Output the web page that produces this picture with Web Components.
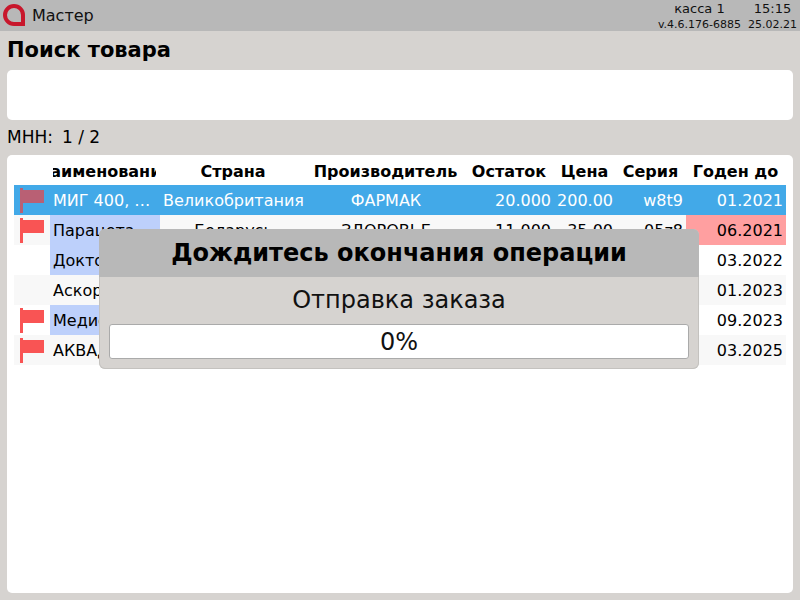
<!DOCTYPE html>
<html lang="ru">
<head>
<meta charset="utf-8">
<title>Мастер</title>
<style>
html, body { margin: 0; height: 100%; }
body {
    width: 800px;
    height: 600px;
    overflow: hidden;
    background: #d6d3d0;
    color: #000;
    font-family: "DejaVu Sans", sans-serif;
}
</style>
</head>
<body>
<pos-screen>
    <top-bar slot="bar" title-text="Мастер" kassa="касса 1" time="15:15" version="v.4.6.176-6885" date="25.02.21"></top-bar>
    <goods-table id="goods"></goods-table>
    <wait-dialog slot="over" heading="Дождитесь окончания операции" message="Отправка заказа" percent="0"></wait-dialog>
</pos-screen>

<script>
class PosScreen extends HTMLElement {
    constructor() {
        super()
        this.attachShadow({ mode: 'open' })
        this.shadowRoot.innerHTML = `<style>
            :host { display: flex; flex-direction: column; position: relative; width: 800px; height: 600px; }
            h1 { margin: 0; padding: 7px 7px 0; height: 32px; box-sizing: border-box; font-size: 21px; line-height: 25px; font-weight: bold; }
            .search { margin: 7px 7px 0; height: 50px; background: #fff; border-radius: 5px; }
            .mnn { display: flex; gap: 9px; padding: 0 7px; height: 35px; font-size: 17px; line-height: 34px; white-space: pre; }
            .panel { margin: 0 7px 7px; flex: 1; background: #fff; border-radius: 5px; padding: 0 7px; }
        </style>
        <slot name="bar"></slot>
        <h1>Поиск товара</h1>
        <div class="search"></div>
        <div class="mnn"><span>МНН:</span><span>1 / 2</span></div>
        <div class="panel"><slot></slot></div>
        <slot name="over"></slot>`
    }
}

class TopBar extends HTMLElement {
    constructor() {
        super()
        this.attachShadow({ mode: 'open' })
    }
    connectedCallback() {
        this.shadowRoot.innerHTML = `<style>
            :host { display: flex; align-items: stretch; height: 31px; background: #b8b8b8; }
            svg { margin: 4px 0 0 3px; width: 22px; height: 22px; flex: none; }
            .name { margin-left: 7px; font-size: 16px; line-height: 31px; color: #111; flex: 1; }
            .info { width: 146px; font-size: 11px; color: #111; display: grid; grid-template-columns: 91px 55px; grid-template-rows: 17px 14px; text-align: center; }
            .big { font-size: 13px; line-height: 17px; }
            .small { line-height: 15px; white-space: nowrap; }
        </style>
        <svg viewBox="0 0 22 22"><path d="M11 2A9 9 0 0 0 2 11A9 9 0 0 0 11 20H20V11A9 9 0 0 0 11 2Z" fill="none" stroke="#c8172c" stroke-width="4"/></svg>
        <div class="name">${this.getAttribute('title-text')}</div>
        <div class="info">
            <div class="big">${this.getAttribute('kassa')}</div>
            <div class="big">${this.getAttribute('time')}</div>
            <div class="small">${this.getAttribute('version')}</div>
            <div class="small">${this.getAttribute('date')}</div>
        </div>`
    }
}

const COLUMNS = [
    ['', 36], ['Наименование', 110], ['Страна', 147], ['Производитель', 158],
    ['Остаток', 89], ['Цена', 62], ['Серия', 70], ['Годен до', 100]
]

const ROWS = [
    { flag: true, sel: true, cells: ['МИГ 400, таблетки', 'Великобритания', 'ФАРМАК', '20.000', '200.00', 'w8t9', '01.2021'] },
    { flag: true, blue: true, late: true, cells: ['Парацетамол', 'Беларусь', 'ЗДОРОВЬЕ', '11.000', '35.00', '05z8', '06.2021'] },
    { blue: true, cells: ['Доктор Мом', 'Индия', 'ЮНИК', '5.000', '90.00', 'a1b2', '03.2022'] },
    { cells: ['Аскорбинка', 'Россия', 'ОЗОН', '40.000', '15.00', 'c3d4', '01.2023'] },
    { flag: true, blue: true, cells: ['Медисорб', 'Россия', 'МЕДИСОРБ', '7.000', '60.00', 'e5f6', '09.2023'] },
    { flag: true, cells: ['АКВАДЕТРИМ', 'Польша', 'ПОЛЬФА', '3.000', '180.00', 'g7h8', '03.2025'] }
]

class GoodsTable extends HTMLElement {
    constructor() {
        super()
        this.attachShadow({ mode: 'open' })
    }
    connectedCallback() {
        const flag = `<svg width="24" height="25" viewBox="0 0 24 25"><rect x="0" y="0" width="3" height="25" fill="currentColor"/><rect x="3" y="2" width="21" height="13" fill="currentColor"/></svg>`
        const head = COLUMNS.map(c => `<th><div>${c[0]}</div></th>`).join('')
        const body = ROWS.map((r, i) => {
            const cls = [r.sel ? 'sel' : '', i % 2 ? 'odd' : ''].join(' ')
            return `<tr class="${cls}">
                <td class="fl">${r.flag ? flag : ''}</td>
                <td class="nm${r.blue ? ' blue' : ''}"><div>${r.cells[0]}</div></td>
                <td class="c"><div>${r.cells[1]}</div></td>
                <td class="c"><div>${r.cells[2]}</div></td>
                <td class="r"><div>${r.cells[3]}</div></td>
                <td class="r"><div>${r.cells[4]}</div></td>
                <td class="r"><div>${r.cells[5]}</div></td>
                <td class="r${r.late ? ' late' : ''}"><div>${r.cells[6]}</div></td>
            </tr>`
        }).join('')
        this.shadowRoot.innerHTML = `<style>
            :host { display: block; font-size: 16px; }
            table { border-collapse: collapse; table-layout: fixed; width: 772px; }
            th { height: 30px; padding: 2px 4px 0 3px; box-sizing: border-box; font-size: 16px; font-weight: bold; white-space: nowrap; }
            th div { display: flex; justify-content: center; overflow: hidden; }
            td { height: 30px; padding: 0 3px; box-sizing: border-box; white-space: nowrap; overflow: hidden; }
            td div { overflow: hidden; text-overflow: ellipsis; }
            tr.odd td { background: #f8f8f8; }
            tr.sel td { background: #42a9e8; color: #fff; }
            tr td.blue { background: #bdd0fb; }
            tr td.late { background: #ff9fa0; }
            .fl { padding: 3px 0 2px 6px; color: #f95454; line-height: 0; }
            .fl svg { display: block; }
            tr.sel .fl { color: #b96074; }
            .c { text-align: center; }
            .r { text-align: right; }
        </style>
        <table>
            <colgroup>${COLUMNS.map(c => `<col style="width:${c[1]}px">`).join('')}</colgroup>
            <thead><tr>${head}</tr></thead>
            <tbody>${body}</tbody>
        </table>`
    }
}

class WaitDialog extends HTMLElement {
    constructor() {
        super()
        this.attachShadow({ mode: 'open' })
    }
    connectedCallback() {
        this.shadowRoot.innerHTML = `<style>
            :host { display: block; position: absolute; left: 99px; top: 229px; width: 600px; height: 140px; box-sizing: border-box; background: #d6d3d0; border-radius: 6px; overflow: hidden; box-shadow: inset 0 0 0 1px #c4c2bf; }
            .head { height: 48px; background: #b8b8b8; font-size: 24px; font-weight: bold; line-height: 49px; text-align: center; }
            .msg { height: 47px; font-size: 24px; line-height: 47px; text-align: center; color: #111; }
            .bar { margin: 0 10px; height: 35px; box-sizing: border-box; background: #fff; border: 1px solid #aaa; border-radius: 3px; font-size: 24px; line-height: 34px; text-align: center; color: #111; }
        </style>
        <div class="head">${this.getAttribute('heading')}</div>
        <div class="msg">${this.getAttribute('message')}</div>
        <div class="bar">${this.getAttribute('percent')}%</div>`
    }
}

customElements.define('pos-screen', PosScreen)
customElements.define('top-bar', TopBar)
customElements.define('goods-table', GoodsTable)
customElements.define('wait-dialog', WaitDialog)
</script>
</body>
</html>
